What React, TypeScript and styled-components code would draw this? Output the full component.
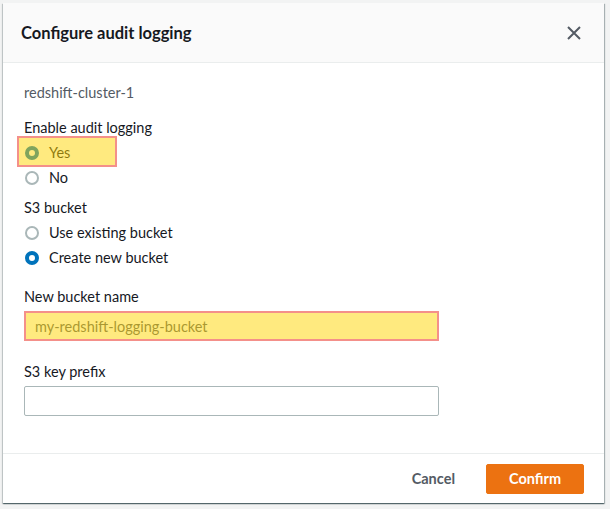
import React, { useState } from "react";
import styled, { createGlobalStyle } from "styled-components";

const GlobalStyle = createGlobalStyle`
  html, body {
    margin: 0;
    padding: 0;
    background: #f2f3f3;
    font-family: Lato, "Open Sans", "Liberation Sans", sans-serif;
    color: #16191f;
  }
`;

const Page = styled.div`
  padding: 3px 6px 6px 3px;
`;

const Modal = styled.div`
  width: 601px;
  height: 500px;
  background: #ffffff;
  box-shadow: 0 1px 1px 0 rgba(0, 28, 36, 0.45), 1px 1px 1px 0 rgba(0, 28, 36, 0.25),
    -1px 1px 1px 0 rgba(0, 28, 36, 0.15);
  display: flex;
  flex-direction: column;
`;

const Header = styled.div`
  height: 59px;
  flex-shrink: 0;
  background: #fafafa;
  border-bottom: 1px solid #eaeded;
  display: flex;
  align-items: center;
  justify-content: space-between;
  padding: 0 22px 0 18px;
`;

const Title = styled.h2`
  margin: 0;
  font-size: 16.5px;
  font-weight: 700;
  color: #16191f;
`;

const CloseButton = styled.button`
  border: none;
  background: none;
  padding: 0;
  width: 16px;
  height: 16px;
  display: flex;
  align-items: center;
  justify-content: center;
  cursor: pointer;
`;

const Body = styled.div`
  flex: 1;
  padding: 19px 21px 0 21px;
  display: flex;
  flex-direction: column;
  font-size: 14.5px;
`;

const ClusterName = styled.div`
  line-height: 22px;
  color: #545b64;
  margin-bottom: 13px;
`;

const Label = styled.div<{ $gap?: number }>`
  line-height: 22px;
  color: #16191f;
  margin-top: ${(p) => p.$gap ?? 0}px;
`;

const RadioGroup = styled.div<{ $top?: number }>`
  display: flex;
  flex-direction: column;
  margin-top: ${(p) => p.$top ?? 0}px;
`;

const RadioRow = styled.label`
  position: relative;
  display: flex;
  align-items: center;
  gap: 10px;
  height: 25px;
  color: #16191f;
  cursor: pointer;
`;

const RadioDot = styled.span<{ $checked: boolean }>`
  box-sizing: border-box;
  width: 14px;
  height: 14px;
  border-radius: 50%;
  background: #ffffff;
  border: ${(p) => (p.$checked ? "4px solid #0073bb" : "2px solid #aab7b8")};
  margin-left: 1px;
`;

const Highlight = styled.span<{ $width: number }>`
  position: absolute;
  top: -4px;
  bottom: -2px;
  left: -7px;
  width: ${(p) => p.$width}px;
  background: rgba(255, 213, 0, 0.5);
  border: 2px solid #f4908a;
  box-sizing: border-box;
  pointer-events: none;
`;

const Field = styled.div`
  position: relative;
  margin-top: 3px;
  width: 415px;
`;

const Input = styled.input`
  box-sizing: border-box;
  width: 100%;
  height: 30px;
  border: 1px solid #aab7b8;
  border-radius: 2px;
  padding: 0 10px;
  font-family: inherit;
  font-size: 14.5px;
  color: #545b64;
  background: #ffffff;
  outline: none;
`;

const InputHighlight = styled.span`
  position: absolute;
  inset: 0;
  background: rgba(255, 213, 0, 0.5);
  border: 2px solid #f4908a;
  pointer-events: none;
`;

const Footer = styled.div`
  height: 49px;
  flex-shrink: 0;
  border-top: 1px solid #eaeded;
  display: flex;
  align-items: center;
  justify-content: flex-end;
  gap: 10px;
  padding: 0 20px;
`;

const TextButton = styled.button`
  border: none;
  background: none;
  font-family: inherit;
  font-size: 14.5px;
  font-weight: 700;
  color: #545b64;
  padding: 0 21px;
  height: 30px;
  cursor: pointer;
`;

const PrimaryButton = styled.button`
  border: 1px solid #ec7211;
  background: #ec7211;
  border-radius: 2px;
  font-family: inherit;
  font-size: 14.5px;
  font-weight: 700;
  color: #ffffff;
  width: 98px;
  height: 30px;
  cursor: pointer;
`;

function CloseIcon() {
  return (
    <svg width="16" height="16" viewBox="0 0 16 16">
      <path d="M2 2 L14 14 M14 2 L2 14" stroke="#545b64" strokeWidth="2" fill="none" />
    </svg>
  );
}

interface RadioProps {
  label: string;
  checked: boolean;
  highlight?: number;
  onSelect: () => void;
}

function Radio({ label, checked, highlight, onSelect }: RadioProps) {
  return (
    <RadioRow onClick={onSelect}>
      <RadioDot $checked={checked} />
      {label}
      {highlight && <Highlight $width={highlight} />}
    </RadioRow>
  );
}

export default function App() {
  const [enabled, setEnabled] = useState(true);
  const [bucket, setBucket] = useState<"existing" | "new">("new");
  const [bucketName, setBucketName] = useState("my-redshift-logging-bucket");
  const [prefix, setPrefix] = useState("");

  return (
    <>
      <GlobalStyle />
      <Page>
        <Modal>
          <Header>
            <Title>Configure audit logging</Title>
            <CloseButton aria-label="Close">
              <CloseIcon />
            </CloseButton>
          </Header>
          <Body>
            <ClusterName>redshift-cluster-1</ClusterName>
            <Label>Enable audit logging</Label>
            <RadioGroup $top={1}>
              <Radio label="Yes" checked={enabled} highlight={100} onSelect={() => setEnabled(true)} />
              <Radio label="No" checked={!enabled} onSelect={() => setEnabled(false)} />
            </RadioGroup>
            <Label $gap={7}>S3 bucket</Label>
            <RadioGroup $top={1}>
              <Radio
                label="Use existing bucket"
                checked={bucket === "existing"}
                onSelect={() => setBucket("existing")}
              />
              <Radio
                label="Create new bucket"
                checked={bucket === "new"}
                onSelect={() => setBucket("new")}
              />
            </RadioGroup>
            <Label $gap={16}>New bucket name</Label>
            <Field>
              <Input value={bucketName} onChange={(e) => setBucketName(e.target.value)} />
              <InputHighlight />
            </Field>
            <Label $gap={20}>S3 key prefix</Label>
            <Field>
              <Input value={prefix} onChange={(e) => setPrefix(e.target.value)} />
            </Field>
          </Body>
          <Footer>
            <TextButton>Cancel</TextButton>
            <PrimaryButton>Confirm</PrimaryButton>
          </Footer>
        </Modal>
      </Page>
    </>
  );
}
